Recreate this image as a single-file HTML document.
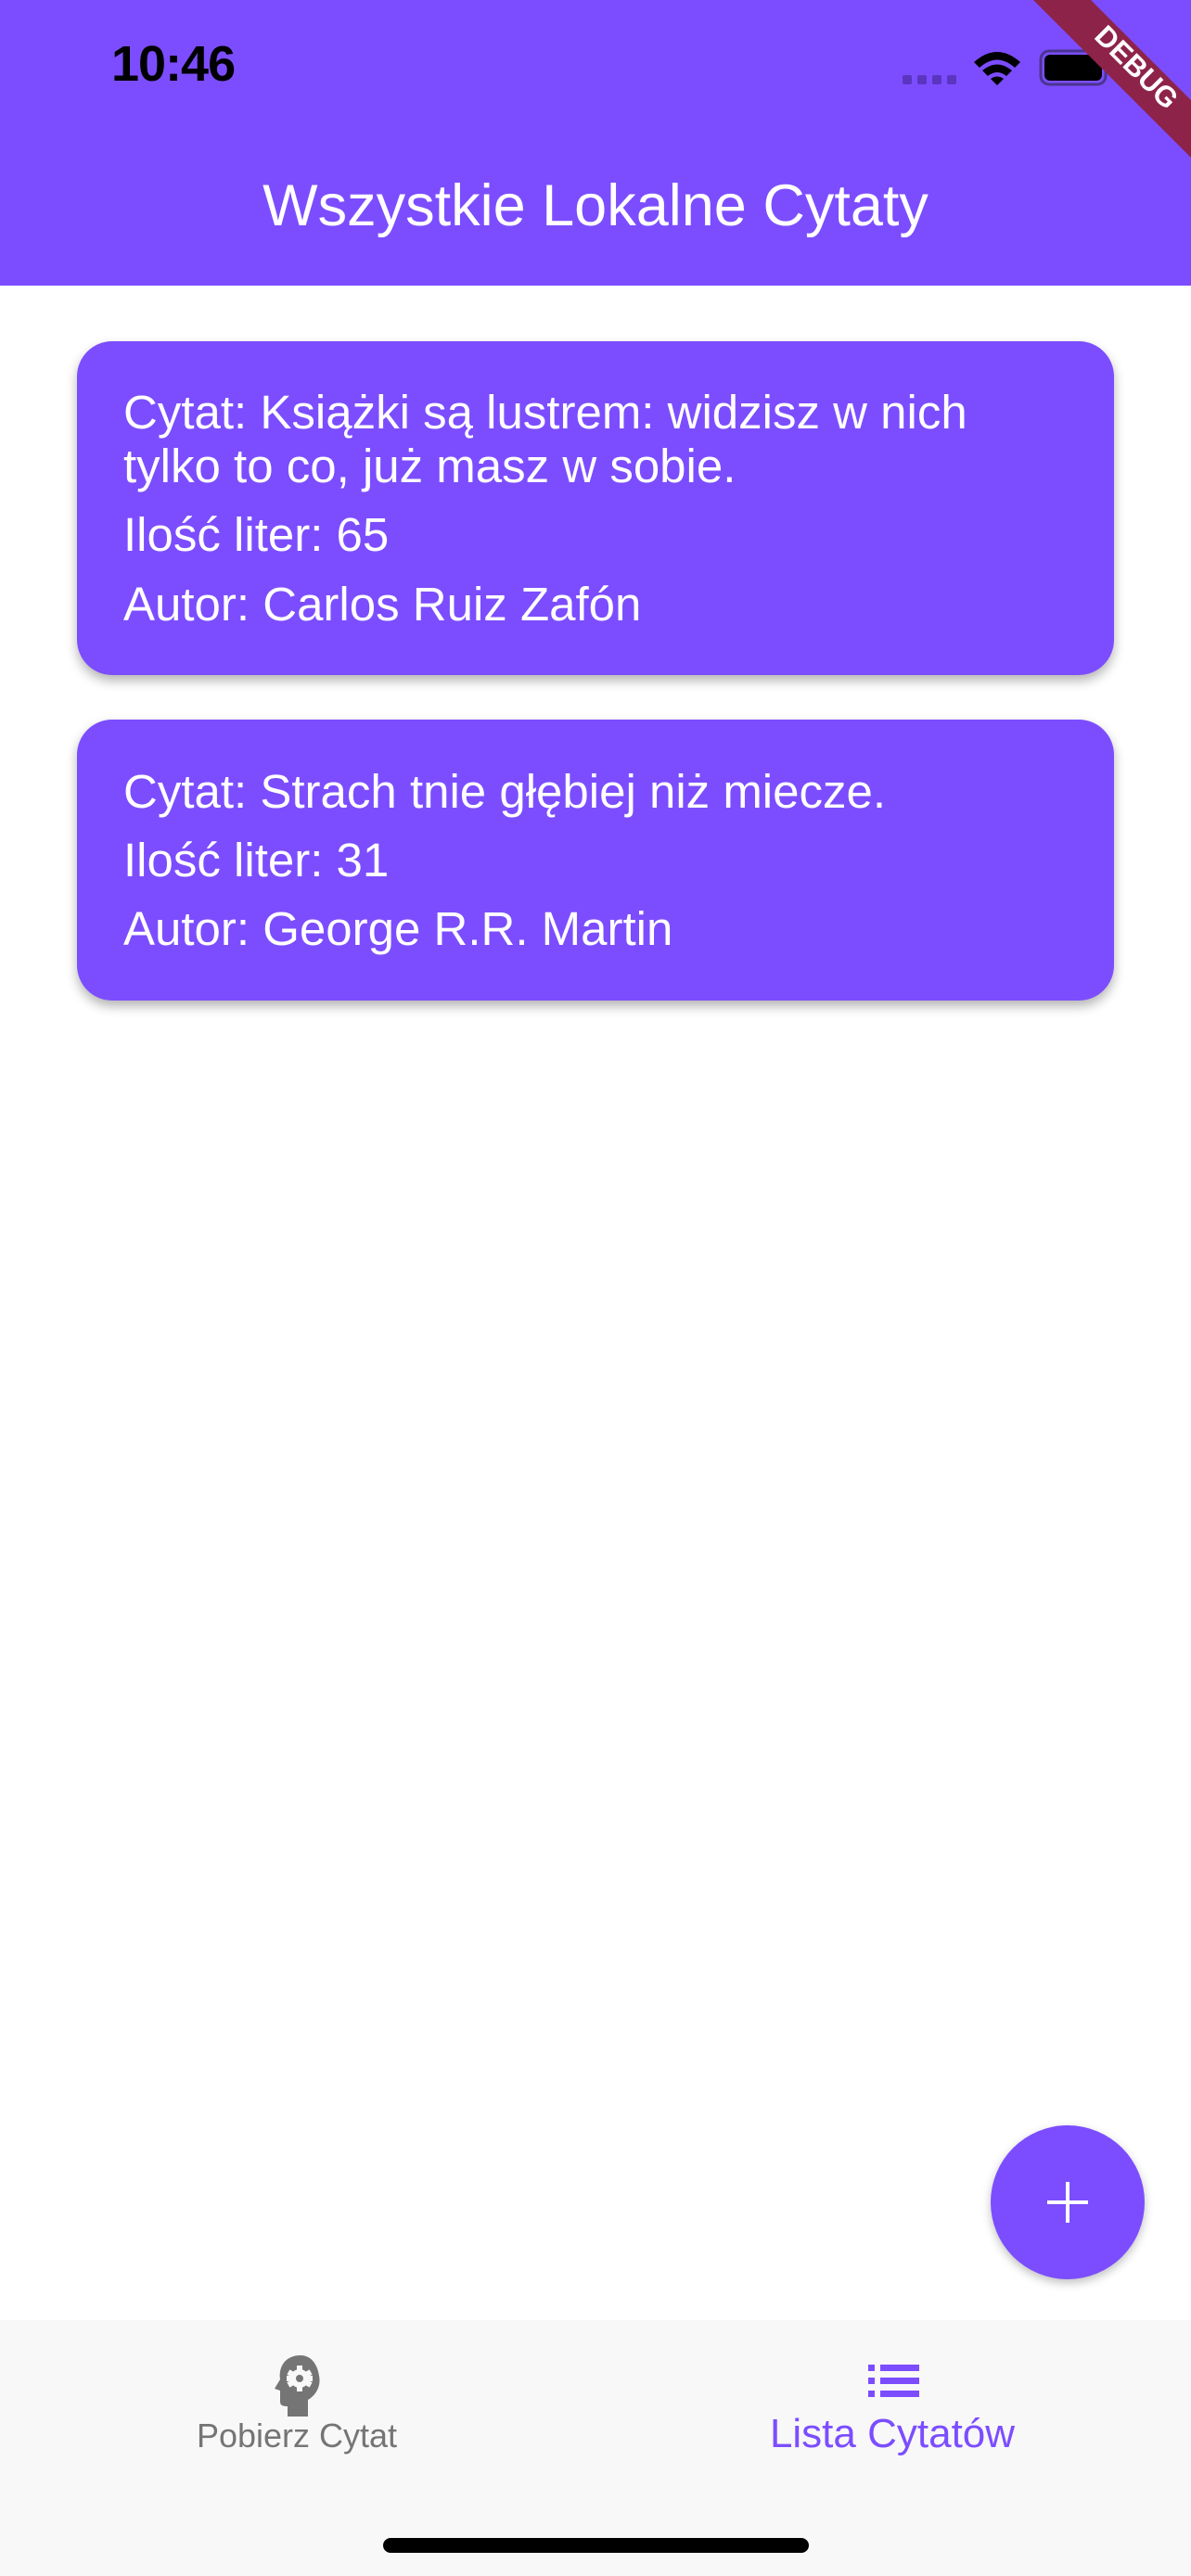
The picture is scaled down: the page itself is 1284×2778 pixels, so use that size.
<!DOCTYPE html>
<html><head><meta charset="utf-8"><style>
*{margin:0;padding:0;box-sizing:border-box}
html,body{width:1284px;height:2778px;overflow:hidden;background:#fff;font-family:"Liberation Sans",sans-serif;position:relative}
.bar{position:absolute;left:0;top:0;width:1284px;height:308px;background:#7c4dff}
.time{position:absolute;left:120px;top:38px;font-size:54px;font-weight:bold;color:#000;letter-spacing:-1px}
.title{position:absolute;left:0;width:1284px;top:186px;text-align:center;color:#fff;font-size:63px}
.card{position:absolute;left:83px;width:1118px;background:#7c4dff;border-radius:38px;box-shadow:0 6px 12px rgba(0,0,0,.3);color:#fff;font-size:51px}
.card div{position:absolute;left:50px;line-height:58px;white-space:nowrap}
.fab{position:absolute;left:1068px;top:2292px;width:166px;height:166px;border-radius:50%;background:#7c4dff;box-shadow:0 4px 10px rgba(0,0,0,.25)}
.nav{position:absolute;left:0;top:2502px;width:1284px;height:276px;background:#f8f8f8}
.lbl{position:absolute;top:2606px;font-size:36px;color:#757575;text-align:center;width:500px}
.home{position:absolute;left:413px;top:2737px;width:459px;height:16px;border-radius:8px;background:#000}
</style></head><body>
<div class="bar"></div>
<div class="time">10:46</div>
<svg style="position:absolute;left:960px;top:40px" width="240" height="70">
<g fill="#5a35c0"><rect x="13" y="41" width="10" height="10" rx="2"/><rect x="29" y="41" width="10" height="10" rx="2"/><rect x="45" y="41" width="10" height="10" rx="2"/><rect x="61" y="41" width="10" height="10" rx="2"/></g>
<path d="M90 27 Q115 5 140 27 L134 33 Q115 16 96 33Z M99 36 Q115 23 131 36 L125 42 Q115 34 105 42Z M108 45 Q115 40 122 45 L115 52Z" fill="#000"/>
<rect x="162" y="15" width="70" height="36" rx="9" fill="none" stroke="#4a3590" stroke-width="3"/>
<rect x="166" y="19" width="62" height="28" rx="6" fill="#000"/>
</svg>
<svg style="position:absolute;left:1084px;top:0" width="200" height="200">
<polygon points="30,0 92,0 200,108 200,170" fill="#8e2349"/>
<text x="0" y="0" transform="translate(134,80) rotate(45)" text-anchor="middle" font-family="Liberation Sans" font-weight="bold" font-size="31" fill="#fff">DEBUG</text>
</svg>
<div class="title">Wszystkie Lokalne Cytaty</div>

<div class="card" style="top:368px;height:360px">
<div style="top:48px">Cytat: Książki są lustrem: widzisz w nich</div>
<div style="top:106px">tylko to co, już masz w sobie.</div>
<div style="top:180px">Ilość liter: 65</div>
<div style="top:255px">Autor: Carlos Ruiz Zafón</div>
</div>
<div class="card" style="top:776px;height:303px">
<div style="top:49px">Cytat: Strach tnie głębiej niż miecze.</div>
<div style="top:123px">Ilość liter: 31</div>
<div style="top:197px">Autor: George R.R. Martin</div>
</div>

<div class="fab"><svg width="166" height="166"><rect x="81" y="61" width="4" height="44" fill="#fff"/><rect x="61" y="81" width="44" height="4" fill="#fff"/></svg></div>

<div class="nav"></div>
<svg style="position:absolute;left:296px;top:2540px" width="50" height="66" viewBox="0 0 50 66">
<path d="M28 0 C12 0 4 12 6 26 L0 36 L6 38 L6 50 C6 54 9 55 14 55 L14 66 L36 66 L36 48 C46 42 50 32 48 22 C46 8 38 0 28 0Z" fill="#757575"/>
<g transform="translate(27,25)" fill="#f8f8f8"><circle r="10"/><rect x="-3" y="-14" width="6" height="28"/><rect x="-14" y="-3" width="28" height="6"/><rect x="-3" y="-14" width="6" height="28" transform="rotate(60)"/><rect x="-3" y="-14" width="6" height="28" transform="rotate(-60)"/><circle r="4" fill="#757575"/></g>
</svg>
<div class="lbl" style="left:70px">Pobierz Cytat</div>
<svg style="position:absolute;left:936px;top:2550px" width="56" height="36">
<g fill="#7c4dff"><rect x="0" y="0" width="7" height="7"/><rect x="13" y="0" width="42" height="7"/><rect x="0" y="14" width="7" height="7"/><rect x="13" y="14" width="42" height="7"/><rect x="0" y="28" width="7" height="7"/><rect x="13" y="28" width="42" height="7"/></g>
</svg>
<div class="lbl" style="left:712px;top:2600px;font-size:44px;color:#7c4dff">Lista Cytatów</div>
<div class="home"></div>
</body></html>
